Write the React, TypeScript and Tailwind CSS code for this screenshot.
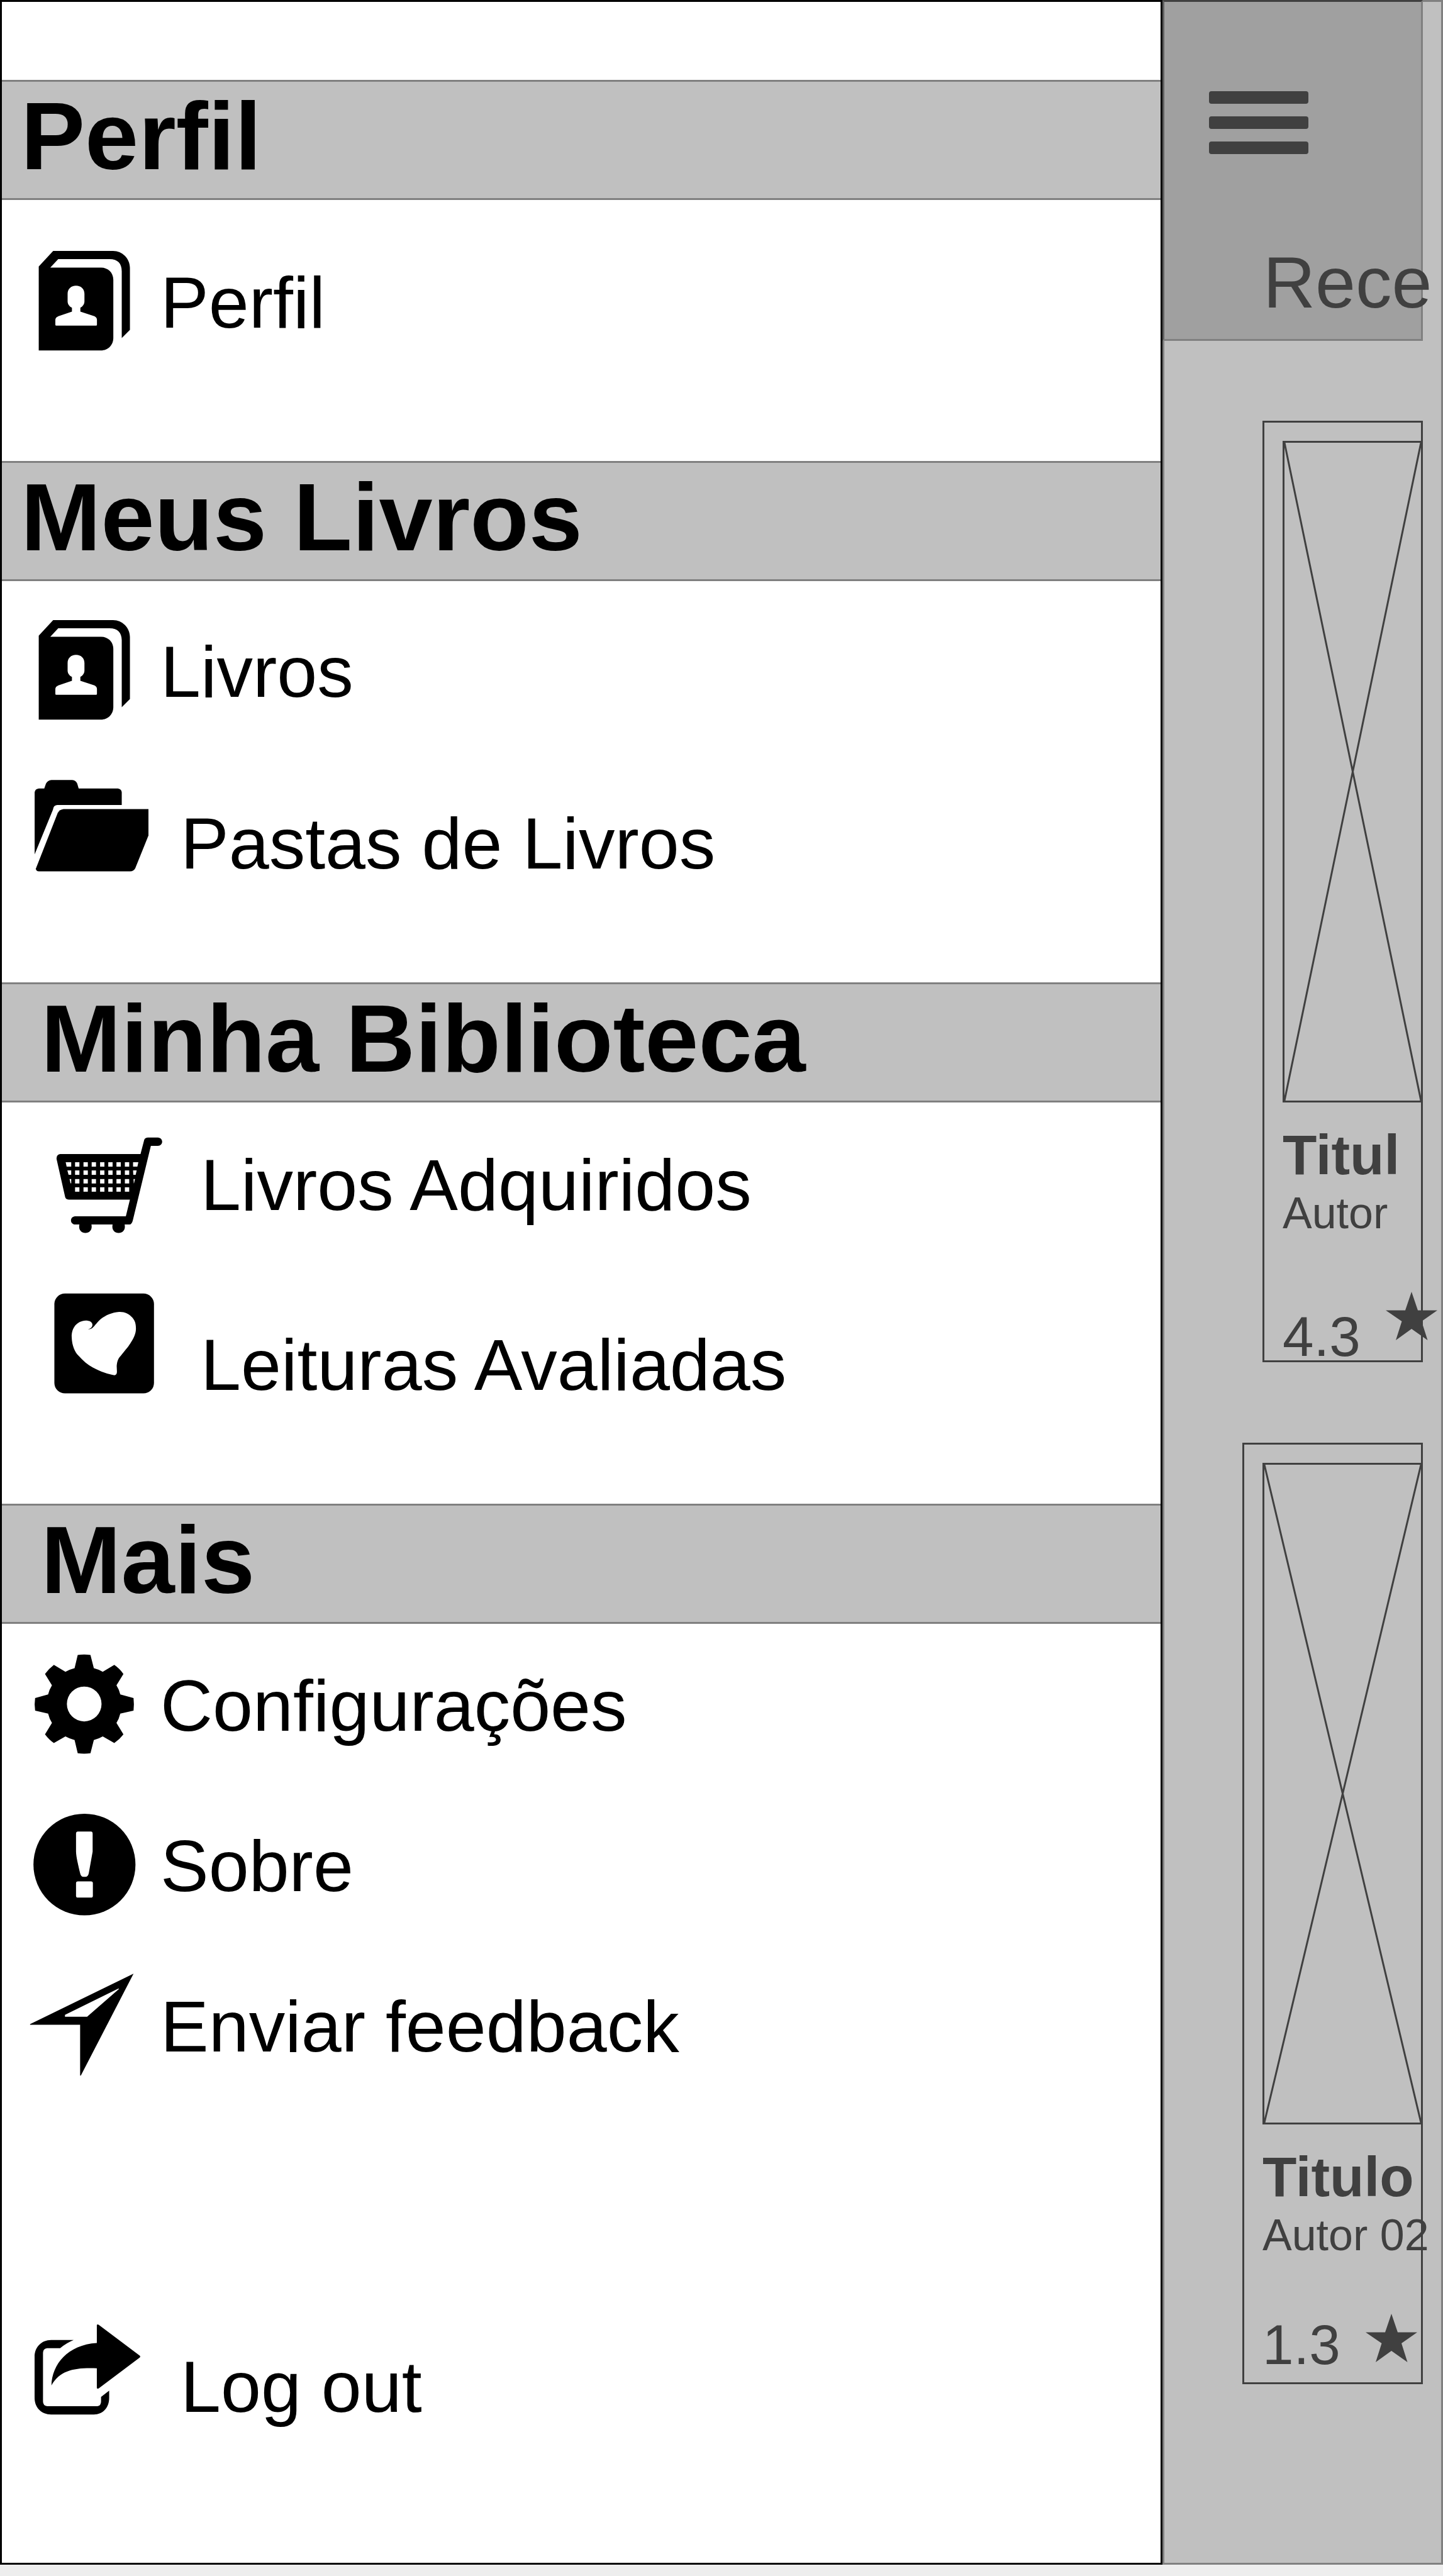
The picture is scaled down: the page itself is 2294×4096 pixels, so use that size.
import type { ReactNode } from "react";

function IconBox({ children }: { children: ReactNode }) {
  return (
    <svg
      viewBox="0 0 208 160"
      className="h-[160px] w-[208px] shrink-0 overflow-visible"
      fill="black"
      aria-hidden="true"
    >
      {children}
    </svg>
  );
}

function ContactBookIcon() {
  return (
    <IconBox>
      <g transform="translate(-47 -323) scale(0.3825 0.3347)">
        <path
          fillRule="evenodd"
          d="M161 1042L221 968H470C508 968 540 1004 540 1048V1343L506 1382V1065C506 1028 490 1007 455 1007H242L209 1047H420C448 1047 471 1070 471 1105V1382C471 1416 448 1441 420 1441H161ZM316 1133C295 1133 281 1149 281 1172V1208C281 1221 289 1233 299 1238V1256L243 1278C234 1282 230 1288 230 1296V1319Q230 1323 234 1323H399Q403 1323 403 1319V1296C403 1288 400 1281 390 1277L334 1256V1238C343 1233 351 1221 351 1208V1172C351 1149 337 1133 316 1133Z"
        />
      </g>
    </IconBox>
  );
}

function FolderIcon() {
  return (
    <IconBox>
      <g transform="translate(-47 -289) scale(0.3825 0.3347)">
        <path d="M144 1259V964Q146 948 161 946H184L191 923Q198 908 214 906H300Q316 908 321 923L327 946H490Q505 949 506 964V1025H238Q226 1026 222 1038L220 1047Z" />
        <path d="M617 1044V1170L562 1326Q555 1340 541 1340H162Q149 1339 149 1327L240 1062Q248 1046 264 1044Z" />
      </g>
    </IconBox>
  );
}

const basketColumns = [312, 347, 381, 416, 450, 484, 519];
const basketRows = [254, 293, 334, 373];

function CartIcon() {
  return (
    <IconBox>
      <g transform="translate(-79 -41) scale(0.3825 0.3347)">
        <path d="M598 154Q600 138 614 137H656C668 138 674 147 674 157C674 168 666 176 656 176H627L552 530Q548 549 538 550H518Q519 555 519 561C519 578 508 590 493 590C478 590 467 578 467 561Q467 555 468 550H380Q381 555 381 561C381 578 370 590 355 590C340 590 329 578 329 561Q329 555 330 550H312C302 549 295 541 295 531C295 520 302 512 312 511H523L540 432H286Q271 430 270 415L235 238Q234 218 250 215H584Z" />
        <g fill="white">
          {basketRows.map((y) =>
            basketColumns.map((x) => <rect key={`${x}-${y}`} x={x} y={y} width="18" height="21" />),
          )}
          <path d="M273 254H296V275H277ZM280 293H296V314H285ZM289 334H296V354H293ZM553 254H575L571 275H553ZM553 293H568L564 314H554ZM555 334H561L557 354H556Z" />
        </g>
      </g>
    </IconBox>
  );
}

function HeartIcon() {
  return (
    <IconBox>
      <g transform="translate(-79 -292) scale(0.3825 0.3347)">
        <rect x="226" y="878" width="414" height="474" rx="44" ry="49" />
        <path
          fill="white"
          d="M366 1047C378 1045 385 1036 384 1024C382 1012 372 1006 356 1006C320 1008 297 1040 298 1085C299 1125 311 1155 326 1173C345 1198 365 1216 385 1229C420 1250 450 1262 476 1266C484 1264 486 1258 486 1248L485 1222C487 1198 492 1185 503 1172C515 1154 530 1136 541 1116C556 1090 565 1068 565 1045C565 1020 560 1005 550 992C535 973 517 964 495 965C465 967 438 982 420 998C405 1012 398 1026 388 1037C382 1045 375 1049 366 1047Z"
        />
      </g>
    </IconBox>
  );
}

function GearIcon() {
  return (
    <IconBox>
      <g transform="translate(-47 -41) scale(0.3825 0.4781)">
        <path
          fillRule="evenodd"
          d="M323 91Q350 88 376 91L390 135Q410 139 427 147L475 124Q497 136 513 154L484 192Q495 206 500 222L555 234Q558 254 555 276L500 286Q495 303 484 317L513 355Q497 372 475 384L427 362Q410 370 390 374L376 418Q350 421 323 418L310 374Q290 370 272 362L224 384Q204 373 187 355L216 317Q205 303 200 286L146 276Q142 254 146 234L200 222Q205 206 216 192L187 154Q204 136 224 124L272 147Q290 139 310 135ZM278 254A72 58 0 0 0 422 254A72 58 0 0 0 278 254Z"
        />
      </g>
    </IconBox>
  );
}

function AlertIcon() {
  return (
    <IconBox>
      <g transform="translate(-47 -296) scale(0.3825 0.4781)">
        <ellipse cx="351" cy="788" rx="212" ry="169" />
        <path
          fill="white"
          d="M324 678H378Q385 678 385 685V745L369 817Q366 829 355 829H347Q336 829 333 817C324 785 317 765 316 745V685Q316 678 324 678Z"
        />
        <rect x="316" y="844" width="70" height="54" rx="8" ry="6" fill="white" />
      </g>
    </IconBox>
  );
}

function SendIcon() {
  return (
    <IconBox>
      <g transform="translate(-47 -551) scale(0.3825 0.4781)">
        <path
          fillRule="evenodd"
          d="M555 1151L336 1490H333V1321H125V1319ZM493 1200L270 1288V1294H362L494 1202Z"
        />
      </g>
    </IconBox>
  );
}

function ShareIcon() {
  return (
    <IconBox>
      <g transform="translate(-47 -44) scale(0.4781 0.2936)">
        <path d="M245 289H170C138 289 115 328 115 380V602C115 655 138 692 170 692H312C342 692 363 655 363 602V563L336 597V622Q336 645 324 647H157Q143 645 143 622V358Q143 336 157 333H200Q222 304 245 289Z" />
        <path d="M322 207Q324 202 328 206L465 374Q468 378 465 383L328 551Q324 554 322 549V442C250 438 200 450 171 535C173 420 225 315 322 305Z" />
      </g>
    </IconBox>
  );
}

function SectionTitle({ children, indent = false }: { children: ReactNode; indent?: boolean }) {
  return (
    <h2
      className={`h-[191px] border-y-3 border-[#808080] bg-[#c0c0c0] text-[153px] leading-[172px] font-bold ${
        indent ? "pl-[62px]" : "pl-[30px]"
      }`}
    >
      {children}
    </h2>
  );
}

type ItemProps = { icon: ReactNode; label: string; low?: boolean; indent?: boolean };

function MenuItem({ icon, label, low = false, indent = false }: ItemProps) {
  return (
    <a
      href="#"
      className={`flex text-[115px] leading-[134px] whitespace-nowrap ${low ? "items-end" : "items-center"} ${
        low || indent ? "gap-8" : ""
      } ${indent ? "pl-[76px]" : "pl-[44px]"}`}
    >
      <span className={low ? "pb-[22px]" : ""}>{icon}</span>
      <span className={low || indent ? "" : "pt-1.5"}>{label}</span>
    </a>
  );
}

function Star() {
  return (
    <svg viewBox="0 0 82 77" className="h-[77px] w-[82px] shrink-0" fill="#404040" aria-hidden="true">
      <path d="M41 0L51 29.5H82L57 47L66.500 77L41 59L16 77L25.500 47L0 29.500H31Z" />
    </svg>
  );
}

type BookProps = { title: string; author: string; rating: string; cardClass: string; ratingClass: string };

function BookCard({ title, author, rating, cardClass, ratingClass }: BookProps) {
  return (
    <article className={`border-3 border-[#404040] pt-[29px] pl-[29px] whitespace-nowrap ${cardClass}`}>
      <div className="-mr-[3px] h-[1052px] border-3 border-[#404040]">
        <svg viewBox="0 0 100 100" preserveAspectRatio="none" className="h-full w-full" aria-hidden="true">
          <path
            d="M0 0L100 100M100 0L0 100"
            fill="none"
            stroke="#404040"
            strokeWidth="3"
            vectorEffect="non-scaling-stroke"
          />
        </svg>
      </div>
      <h3 className="mt-[31px] text-[89px] leading-[104px] font-bold">{title}</h3>
      <p className="text-[70px] leading-[82px]">{author}</p>
      <div className="mt-[84px] flex h-[109px] items-start gap-10">
        <span className={`text-[89px] leading-[78px] ${ratingClass}`}>{rating}</span>
        <Star />
      </div>
    </article>
  );
}

export default function App() {
  return (
    <div className="flex min-h-screen flex-col bg-[#eeeeee] pb-[18px] font-['Liberation_Sans',Arial,sans-serif] text-black">
      <div className="flex flex-1">
        <nav className="flex min-w-0 flex-1 flex-col border-3 border-black bg-white pt-[124px]">
          <section>
            <SectionTitle>Perfil</SectionTitle>
            <div className="pt-[80px] pb-[175px]">
              <MenuItem icon={<ContactBookIcon />} label="Perfil" />
            </div>
          </section>
          <section>
            <SectionTitle>Meus Livros</SectionTitle>
            <div className="flex flex-col gap-[81px] pt-[61px] pb-[154px]">
              <MenuItem icon={<ContactBookIcon />} label="Livros" />
              <MenuItem icon={<FolderIcon />} label="Pastas de Livros" low />
            </div>
          </section>
          <section>
            <SectionTitle indent>Minha Biblioteca</SectionTitle>
            <div className="flex flex-col gap-[91px] pt-[51px] pb-[154px]">
              <MenuItem icon={<CartIcon />} label="Livros Adquiridos" indent />
              <MenuItem icon={<HeartIcon />} label="Leituras Avaliadas" low indent />
            </div>
          </section>
          <section>
            <SectionTitle indent>Mais</SectionTitle>
            <div className="flex flex-col gap-[95px] pt-[47px]">
              <MenuItem icon={<GearIcon />} label="Configurações" />
              <MenuItem icon={<AlertIcon />} label="Sobre" />
              <MenuItem icon={<SendIcon />} label="Enviar feedback" />
            </div>
          </section>
          <div className="mt-auto pb-[213px]">
            <MenuItem icon={<ShareIcon />} label="Log out" low />
          </div>
        </nav>

        <main className="w-[446px] shrink-0 border-3 border-[#808080] bg-[#c0c0c0] pr-[29px] text-[#404040]">
          <header className="-mt-[3px] -ml-[3px] border-3 border-t-[#404040] border-r-[#808080] border-b-[#808080] border-l-[#606060] bg-[#a0a0a0] pt-[142px] pb-[23px]">
            <button type="button" aria-label="Menu" className="ml-[71px] flex w-[158px] flex-col gap-5">
              <span className="h-5 w-full rounded-[4px] bg-[#404040]" />
              <span className="h-5 w-full rounded-[4px] bg-[#404040]" />
              <span className="h-5 w-full rounded-[4px] bg-[#404040]" />
            </button>
            <button type="button" className="mt-[137px] ml-[157px] block text-[115px] leading-[134px] whitespace-nowrap">
              Rece
            </button>
          </header>
          <div className="flex flex-col gap-32 pt-[127px]">
            <BookCard title="Titul" author="Autor" rating="4.3" cardClass="ml-[156px]" ratingClass="mt-8" />
            <BookCard title="Titulo" author="Autor 02" rating="1.3" cardClass="ml-[124px]" ratingClass="mt-[10px]" />
          </div>
        </main>
      </div>
    </div>
  );
}
